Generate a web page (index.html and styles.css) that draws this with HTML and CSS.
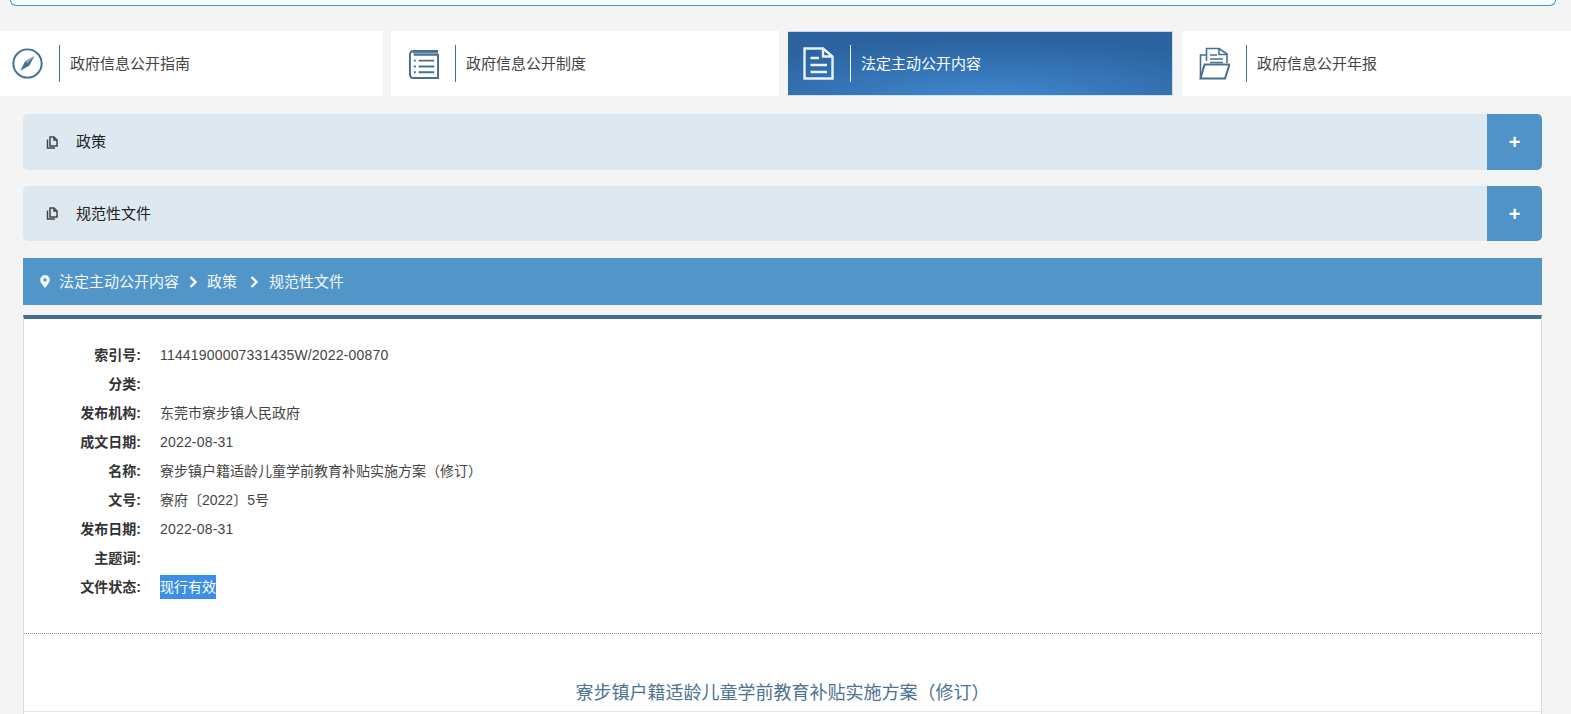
FILE: index.html
```html
<!DOCTYPE html>
<html lang="zh-CN">
<head>
<meta charset="utf-8">
<title>法定主动公开内容</title>
<link rel="stylesheet" href="styles.css">
</head>
<body>
<div class="search-edge"></div>

<nav class="tabs">
  <a class="tab tab-first">
    <svg class="tab-icon" viewBox="0 0 32 32"><circle cx="16" cy="16" r="14.6" fill="none" stroke="currentColor" stroke-width="2"/><path d="M23 8.500 18 18 8.500 23.500 13.600 13.800Z" fill="currentColor"/><path d="M23 8.500 13.600 13.800 16 16Z" fill="#8aa6bc"/></svg>
    <span class="tab-text">政府信息公开指南</span>
  </a>
  <a class="tab">
    <svg class="tab-icon" viewBox="0 0 32 32" fill="none" stroke="currentColor"><path d="M31 3H6Q2 3 2 7V27Q2 31 6 31H31V7H6" stroke-width="2"/><path d="M5 5H31" stroke-width="1.4"/><path d="M11 13H27M11 19H27M11 25H27" stroke-width="2"/><path d="M6 13H8M6 19H8M6 25H8" stroke-width="2"/></svg>
    <span class="tab-text">政府信息公开制度</span>
  </a>
  <a class="tab tab-active">
    <svg class="tab-icon" viewBox="0 0 31 33" fill="none" stroke="currentColor" stroke-width="2.400"><path d="M1.500 1.500H20L29.500 9.500V31.500H1.500Z"/><path d="M20 1.500V9.500H29.500"/><path d="M7.500 11H16M7.500 18H24M7.500 25H24"/></svg>
    <span class="tab-text">法定主动公开内容</span>
  </a>
  <a class="tab">
    <svg class="tab-icon" viewBox="0 0 31 33" fill="none" stroke="currentColor" stroke-width="1.600"><path d="M7.500 14V1.500H20L28 7V16"/><path d="M20 1.500V7.500H28"/><path d="M11 8H18M11 12H24M11 15.500H24" stroke-width="1.400"/><path d="M7.500 8H1.500V31"/><path d="M1.500 31.500 5.500 17.500H30.500L26 31.500Z" stroke-width="2"/></svg>
    <span class="tab-text">政府信息公开年报</span>
  </a>
</nav>

<main class="main">
  <div class="acc">
    <div class="acc-title">
      <svg class="acc-icon" viewBox="0 0 12 13" fill="none" stroke="currentColor" stroke-width="1.500"><path d="M4 1H8L11 4V10H4Z"/><path d="M8 1V4H11"/><path d="M1.500 3.500V12H9"/></svg>
      <span>政策</span>
    </div>
    <div class="acc-plus">+</div>
  </div>
  <div class="acc">
    <div class="acc-title">
      <svg class="acc-icon" viewBox="0 0 12 13" fill="none" stroke="currentColor" stroke-width="1.500"><path d="M4 1H8L11 4V10H4Z"/><path d="M8 1V4H11"/><path d="M1.500 3.500V12H9"/></svg>
      <span>规范性文件</span>
    </div>
    <div class="acc-plus">+</div>
  </div>

  <div class="crumbs">
    <svg class="pin" viewBox="0 0 10 13"><path fill-rule="evenodd" d="M5 0A4.800 4.800 0 0 0 .2 4.800C.2 8 5 13 5 13S9.800 8 9.800 4.800A4.800 4.800 0 0 0 5 0ZM5 3.200A1.700 1.700 0 1 1 5 6.600 1.700 1.700 0 0 1 5 3.200Z" fill="currentColor"/></svg>
    <span>法定主动公开内容</span>
    <svg class="chev" viewBox="0 0 8 12"><path d="M1.500 1 6.500 6 1.500 11" fill="none" stroke="currentColor" stroke-width="2.400"/></svg>
    <span>政策</span>
    <svg class="chev chev-wide" viewBox="0 0 8 12"><path d="M1.500 1 6.500 6 1.500 11" fill="none" stroke="currentColor" stroke-width="2.400"/></svg>
    <span>规范性文件</span>
  </div>

  <article class="article">
    <section class="meta">
      <div class="row"><b class="label">索引号:</b><span class="value num">11441900007331435W/2022-00870</span></div>
      <div class="row"><b class="label">分类:</b><span class="value"></span></div>
      <div class="row"><b class="label">发布机构:</b><span class="value">东莞市寮步镇人民政府</span></div>
      <div class="row"><b class="label">成文日期:</b><span class="value num">2022-08-31</span></div>
      <div class="row"><b class="label">名称:</b><span class="value">寮步镇户籍适龄儿童学前教育补贴实施方案（修订）</span></div>
      <div class="row"><b class="label">文号:</b><span class="value">寮府〔2022〕5号</span></div>
      <div class="row"><b class="label">发布日期:</b><span class="value num">2022-08-31</span></div>
      <div class="row"><b class="label">主题词:</b><span class="value"></span></div>
      <div class="row"><b class="label">文件状态:</b><span class="value status">现行有效</span></div>
    </section>
    <h1 class="title">寮步镇户籍适龄儿童学前教育补贴实施方案（修订）</h1>
  </article>
</main>
</body>
</html>
```

FILE: styles.css
```css
* { box-sizing: border-box; }

html, body { margin: 0; padding: 0; }

body {
  background: #f4f4f4;
  color: #444;
  font-family: "Liberation Sans", "Noto Sans CJK SC", sans-serif;
  font-size: 14px;
  line-height: 20px;
  height: 714px;
  overflow: hidden;
}

.search-edge {
  height: 6px;
  margin: 0 15px 0 10px;
  background: #f6fbfe;
  border: 1px solid #4f8fc4;
  border-top: 0;
  border-radius: 0 0 6px 6px;
}

/* tabs */
.tabs {
  display: grid;
  grid-template-columns: 382px 388px 385px 1fr;
  column-gap: 9px;
  height: 65px;
  margin-top: 25px;
}

.tab {
  display: flex;
  align-items: center;
  padding-left: 17px;
  background: #fff;
  color: #46708f;
  font-size: 15px;
}

.tab-first { padding-left: 12px; margin-right: -1px; }

.tab-icon { width: 31px; height: 33px; margin-right: 16px; flex: none; }

.tab-text {
  display: block;
  height: 37px;
  line-height: 37px;
  padding-left: 10px;
  border-left: 1px solid #46708f;
  color: #444;
}

.tab-active {
  padding-left: 15px;
  color: #e9f2f9;
  background: radial-gradient(ellipse 300px 60px at 52% 105%, #3f89cf 0%, #3473b5 55%, #2c629f 100%);
  border: 1px solid #c4dcee;
  border-left: 0;
  border-bottom: 1px solid #d4e4f0;
}

.tab-active .tab-text { border-left-color: #f2f7fb; color: #fff; }

/* accordion */
.main { padding: 0 29px 0 23px; }

.acc {
  display: flex;
  height: 56px;
  margin-top: 18px;
  border-radius: 5px;
  background: #dee8f1;
  overflow: hidden;
}

.acc + .acc { height: 55px; margin-top: 16px; }

.acc-title {
  flex: 1;
  display: flex;
  align-items: center;
  padding-left: 23px;
  font-size: 15px;
  color: #222;
}

.acc-icon { width: 12px; height: 13px; margin-right: 18px; color: #444; }

.acc-plus {
  width: 55px;
  display: flex;
  align-items: center;
  justify-content: center;
  background: #4f93c8;
  color: #fff;
  font-size: 20px;
  font-weight: bold;
}

/* breadcrumb */
.crumbs {
  display: flex;
  align-items: center;
  height: 47px;
  margin-top: 17px;
  padding-left: 17px;
  background: #5195c9;
  color: #f4fafe;
  font-size: 15px;
}

.pin { width: 10px; height: 13px; margin-right: 9px; }

.chev { width: 8px; height: 12px; margin: 0 10px; }

.chev-wide { margin: 0 11px 0 13px; }

/* article */
.article {
  margin-top: 10px;
  height: 399px;
  background: #fff;
  border-top: 4px solid #41708f;
  border-left: 1px solid #dcdcdc;
  border-right: 1px solid #dcdcdc;
}

.meta {
  padding: 21px 0 32px;
  border-bottom: 1px dotted #6f98ad;
}

.row { display: flex; align-items: center; height: 29px; }

.label {
  width: 117px;
  text-align: right;
  color: #333;
}

.value { margin-left: 19px; color: #444; }

.num { letter-spacing: 0.18px; }

.status {
  height: 24px;
  line-height: 24px;
  background: #3d8fe6;
  color: #fff;
}

.title {
  margin: 0;
  padding: 45px 0 4px;
  height: 78px;
  line-height: 28px;
  border-bottom: 1px solid #e6e6e6;
  text-align: center;
  font-size: 18px;
  font-weight: normal;
  color: #4a7394;
}
```
